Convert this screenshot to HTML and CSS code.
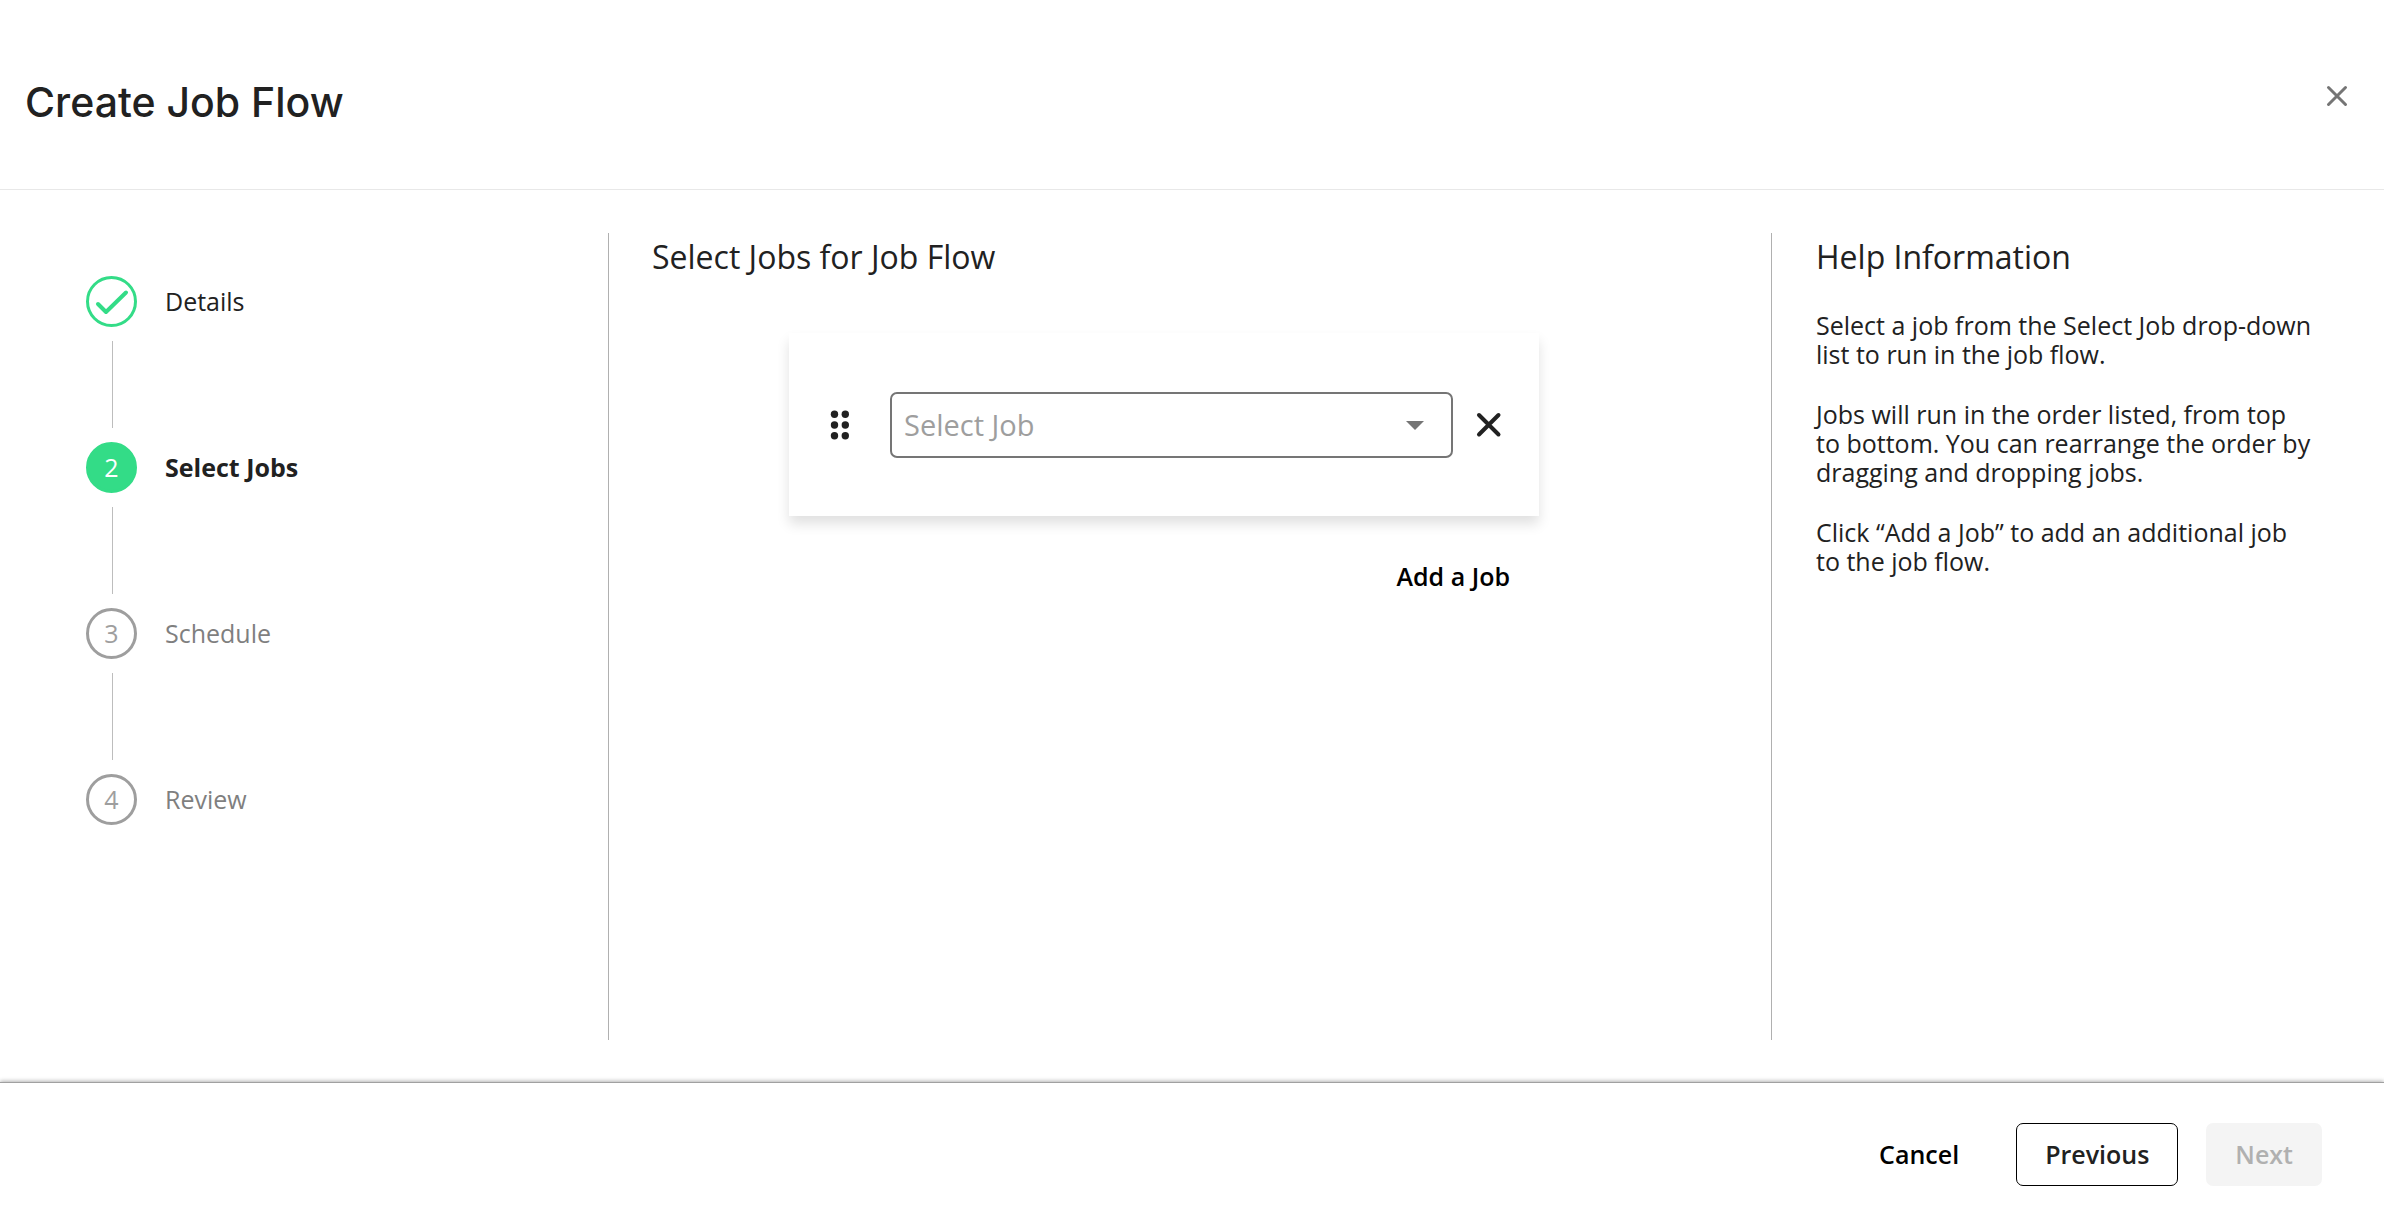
FILE: index.html
```html
<!DOCTYPE html>
<html lang="en">
<head>
  <meta charset="UTF-8">
  <title>Create Job Flow</title>
  <link rel="stylesheet" href="styles.css">
</head>
<body>
  <header class="header">
    <h1 class="title">Create Job Flow</h1>
    <button class="icon-btn close" type="button" aria-label="Close">
      <svg width="24" height="24" viewBox="0 0 24 24"><path d="M3.5 3.5l17 17M20.5 3.5l-17 17"/></svg>
    </button>
  </header>

  <main class="main">
    <nav class="sidebar">
      <ol class="steps">
        <li class="step done">
          <span class="circle">
            <svg width="36" height="30" viewBox="0 0 36 30"><path d="M4 17l8 8L32 5.500"/></svg>
          </span>
          <span class="label">Details</span>
        </li>
        <li class="step active">
          <span class="circle">2</span>
          <span class="label">Select Jobs</span>
        </li>
        <li class="step">
          <span class="circle">3</span>
          <span class="label">Schedule</span>
        </li>
        <li class="step">
          <span class="circle">4</span>
          <span class="label">Review</span>
        </li>
      </ol>
    </nav>

    <section class="content">
      <h2 class="heading">Select Jobs for Job Flow</h2>
      <div class="jobs">
        <div class="card">
          <svg class="handle" width="20" height="30" viewBox="0 0 20 30">
            <circle cx="4.500" cy="4.200" r="3.700"/><circle cx="15.300" cy="4.200" r="3.700"/>
            <circle cx="4.500" cy="15" r="3.700"/><circle cx="15.300" cy="15" r="3.700"/>
            <circle cx="4.500" cy="25.800" r="3.700"/><circle cx="15.300" cy="25.800" r="3.700"/>
          </svg>
          <div class="select-box">
            <select class="select" aria-label="Select Job">
              <option>Select Job</option>
            </select>
            <svg class="arrow" width="18" height="9" viewBox="0 0 18 9"><path d="M0 0h18L9 9z"/></svg>
          </div>
          <button class="icon-btn remove" type="button" aria-label="Remove job">
            <svg width="26" height="26" viewBox="0 0 26 26"><path d="M3 3l19.500 19.500M22.500 3L3 22.500"/></svg>
          </button>
        </div>
        <button class="btn add" type="button">Add a Job</button>
      </div>
    </section>

    <aside class="help">
      <h2 class="heading">Help Information</h2>
      <p>Select a job from the Select Job drop-down list to run in the job flow.</p>
      <p>Jobs will run in the order listed, from top to bottom. You can rearrange the order by dragging and dropping jobs.</p>
      <p>Click “Add a Job” to add an additional job to the job flow.</p>
    </aside>
  </main>

  <footer class="footer">
    <button class="btn" type="button">Cancel</button>
    <button class="btn outline" type="button">Previous</button>
    <button class="btn filled" type="button" disabled>Next</button>
  </footer>
</body>
</html>
```
FILE: styles.css
```css
* {
  box-sizing: border-box;
}
body {
  margin: 0;
  min-height: 100vh;
  display: flex;
  flex-direction: column;
  font-family: 'Open Sans', sans-serif;
  font-size: 25px;
  line-height: 29px;
  color: #212121;
  background: #fff;
}
.header {
  display: flex;
  justify-content: space-between;
  align-items: flex-start;
  padding: 76px 35px 61px 25px;
  border-bottom: 1px solid #e8e8e8;
}
.title {
  margin: 0;
  font-family: Inter, sans-serif;
  font-size: 41px;
  line-height: 52px;
  font-weight: 500;
}
.icon-btn {
  display: flex;
  padding: 0;
  border: none;
  background: none;
  cursor: pointer;
}
.icon-btn svg {
  fill: none;
  stroke-linecap: round;
}
.close {
  margin-top: 8px;
}
.close svg {
  stroke: #757575;
  stroke-width: 3;
}
.main {
  flex: 1;
  display: grid;
  grid-template-columns: 608fr 1163fr 613fr;
  padding: 43px 0;
}
.steps {
  margin: 0;
  padding: 43px 0 0 86px;
  list-style: none;
}
.step {
  display: grid;
  grid-template-columns: 51px 1fr;
  column-gap: 28px;
  align-items: center;
  color: #7f7f7f;
}
/* connector between two steps */
.step:not(:last-child)::after {
  content: '';
  width: 1px;
  height: 87px;
  margin: 14px 26px;
  background: #bdbdbd;
}
.circle {
  display: flex;
  justify-content: center;
  align-items: center;
  width: 51px;
  height: 51px;
  border: 3px solid #9e9e9e;
  border-radius: 50%;
  color: #9e9e9e;
}
.circle svg {
  fill: none;
  stroke: #33dc87;
  stroke-width: 4;
  stroke-linecap: round;
  stroke-linejoin: round;
}
.done {
  color: #212121;
}
.done .circle {
  border-color: #33dc87;
}
.active {
  color: #212121;
  font-weight: 700;
}
.active .circle {
  border-color: #33dc87;
  background: #33dc87;
  color: #fff;
  font-weight: 400;
}
.content {
  padding: 0 95px 0 43px;
  border-left: 1px solid #b0b0b0;
}
.heading {
  margin: 0;
  font-size: 32px;
  line-height: 48px;
  font-weight: 400;
}
.jobs {
  display: flex;
  flex-direction: column;
  align-items: flex-end;
  max-width: 750px;
  margin: 52px auto 0;
}
.card {
  display: flex;
  align-items: center;
  width: 100%;
  padding: 59px 37px 58px 41px;
  background: #fff;
  box-shadow: 0 8px 12px rgba(0, 0, 0, 0.12);
}
.handle {
  fill: #212121;
}
.select-box {
  position: relative;
  flex: 1;
  margin: 0 23px 0 40px;
}
.select {
  display: block;
  width: 100%;
  height: 66px;
  padding: 0 12px;
  appearance: none;
  border: 2px solid #757575;
  border-radius: 7px;
  background: #fff;
  font: inherit;
  font-size: 29px;
  line-height: 40px;
  color: #9e9e9e;
}
.arrow {
  position: absolute;
  top: 29px;
  right: 29px;
  fill: #757575;
  pointer-events: none;
}
.remove svg {
  stroke: #212121;
  stroke-width: 4;
}
.btn {
  height: 63px;
  padding: 0 28px;
  border: 1px solid transparent;
  border-radius: 7px;
  background: none;
  font: inherit;
  font-weight: 600;
  color: #000;
  cursor: pointer;
}
.add {
  margin-top: 29px;
}
.outline {
  border-color: #000;
  color: #212121;
}
.filled {
  background: #f4f4f4;
  color: #b0b0b0;
  cursor: default;
}
.help {
  padding: 0 70px 0 44px;
  border-left: 1px solid #b0b0b0;
}
.help .heading {
  margin-bottom: 30px;
}
.help p {
  margin: 0 0 31px;
}
.footer {
  display: flex;
  justify-content: flex-end;
  gap: 28px;
  padding: 40px 62px 20px 0;
  background: #fff;
  box-shadow: 0 -1px 0 #a0a0a0, 0 -2px 4px rgba(0, 0, 0, 0.3);
}
```
